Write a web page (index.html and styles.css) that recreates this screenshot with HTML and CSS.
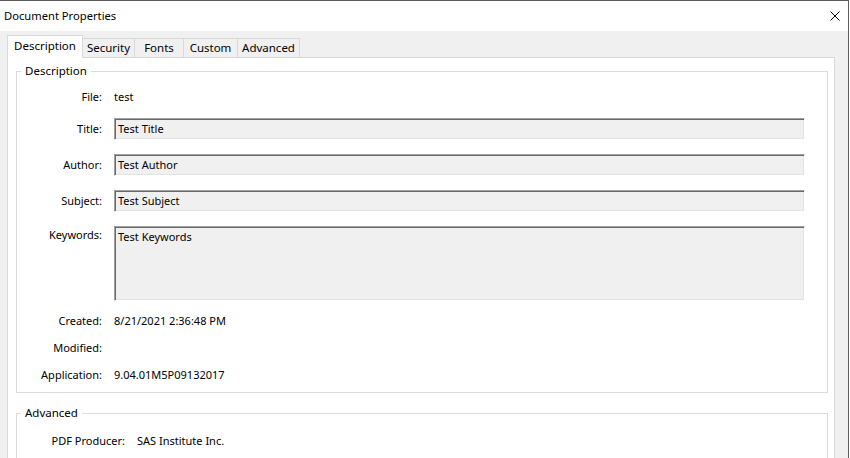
FILE: index.html
```html
<!DOCTYPE html>
<html lang="en">
<head>
<meta charset="utf-8">
<title>Document Properties</title>
<link rel="stylesheet" href="styles.css">
</head>
<body>
<div class="window">
  <div class="titlebar">
    <span class="title">Document Properties</span>
    <svg class="close" width="10" height="10" viewBox="0 0 10 10" aria-label="Close">
      <path d="M0.5 0.5 L9.5 9.5 M9.5 0.5 L0.5 9.5" stroke="#000" stroke-width="1" fill="none"/>
    </svg>
  </div>
  <div class="client">
    <div class="tabs">
      <div class="tab active tab-description">Description</div>
      <div class="tab tab-security">Security</div>
      <div class="tab tab-fonts">Fonts</div>
      <div class="tab tab-custom">Custom</div>
      <div class="tab tab-advanced">Advanced</div>
    </div>
    <div class="panel">
      <fieldset class="group group-description">
        <legend>Description</legend>
        <div class="row row-file">
          <span class="label">File:</span>
          <span class="value">test</span>
        </div>
        <div class="row row-field">
          <span class="label">Title:</span>
          <div class="box">Test Title</div>
        </div>
        <div class="row row-field">
          <span class="label">Author:</span>
          <div class="box">Test Author</div>
        </div>
        <div class="row row-field">
          <span class="label">Subject:</span>
          <div class="box">Test Subject</div>
        </div>
        <div class="row row-keywords">
          <span class="label">Keywords:</span>
          <div class="box box-multi">Test Keywords</div>
        </div>
        <div class="row row-info row-created">
          <span class="label">Created:</span>
          <span class="value">8/21/2021 2:36:48 PM</span>
        </div>
        <div class="row row-info">
          <span class="label">Modified:</span>
          <span class="value"></span>
        </div>
        <div class="row row-info">
          <span class="label">Application:</span>
          <span class="value">9.04.01M5P09132017</span>
        </div>
      </fieldset>
      <fieldset class="group group-advanced">
        <legend>Advanced</legend>
        <div class="row row-producer">
          <span class="label">PDF Producer:</span>
          <span class="value">SAS Institute Inc.</span>
        </div>
      </fieldset>
    </div>
  </div>
</div>
</body>
</html>
```
FILE: styles.css
```css
* {
  box-sizing: border-box;
}

html, body {
  margin: 0;
  padding: 0;
  background: #ffffff;
  overflow: hidden;
}

body {
  width: 850px;
  height: 458px;
  font-family: "Noto Sans", "Open Sans", sans-serif;
  font-size: 11px;
  line-height: 16px;
  color: #000;
}

.window {
  width: 849px;
  height: 458px;
  overflow: hidden;
  border-top: 1px solid #5c5c5c;
  border-right: 1px solid #5c5c5c;
  display: flex;
  flex-direction: column;
}

/* caption bar */
.titlebar {
  height: 30px;
  flex: none;
  background: #fff;
  display: flex;
  align-items: center;
  justify-content: space-between;
  padding: 0 8px 0 4px;
  font-size: 11.2px;
}

.close {
  display: block;
  margin-top: -1px;
}

/* dialog client area */
.client {
  flex: 1;
  background: #f0f0f0;
  padding: 4px 13px 0 7px;
  display: flex;
  flex-direction: column;
}

.tabs {
  display: flex;
  align-items: flex-end;
  height: 22px;
  flex: none;
}

.tab {
  height: 19px;
  border-top: 1px solid #d9d9d9;
  border-right: 1px solid #d9d9d9;
  background: #f0f0f0;
  display: flex;
  align-items: center;
  justify-content: center;
  white-space: nowrap;
  font-size: 11.5px;
}

.tab.active {
  position: relative;
  z-index: 1;
  height: 23px;
  margin-bottom: -1px;
  background: #fff;
  border-left: 1px solid #d9d9d9;
  padding-bottom: 2px;
}

.tab-description { width: 76px; }
.tab-security { width: 52px; }
.tab-fonts { width: 49px; }
.tab-custom { width: 54px; }
.tab-advanced { width: 62px; }

.panel {
  flex: 1;
  background: #fff;
  border: 1px solid #d9d9d9;
  border-bottom: none;
  padding: 0 6px 0 8px;
}

/* group boxes */
.group {
  margin: 5px 0 0 0;
  padding: 7px 22px 6px 0;
  border: 1px solid #dcdcdc;
  min-width: 0;
}

.group legend {
  margin-left: 4px;
  padding: 0 4px;
  line-height: 16px;
  font-size: 11.5px;
}

.group-advanced {
  margin-top: 12px;
  padding-top: 9px;
  padding-bottom: 40px;
}

.row {
  display: grid;
  grid-template-columns: 85px 1fr;
  column-gap: 12px;
  align-items: center;
  min-height: 22px;
}

.label {
  text-align: right;
  white-space: nowrap;
}

.value {
  white-space: nowrap;
}

.row-file { margin-bottom: 10px; }
.row-field { margin-bottom: 14px; }
.row-keywords {
  align-items: start;
  margin-bottom: 9px;
}
.row-keywords .label { padding-top: 1px; }
.row-info + .row-info { margin-top: 5px; }

.row-producer {
  grid-template-columns: 108px 1fr;
}

/* sunken read-only edit fields */
.box {
  height: 22px;
  background: #f0f0f0;
  border: 1px solid;
  border-color: #a0a0a0 #ffffff #ffffff #a0a0a0;
  box-shadow: inset 1px 1px 0 #696969, inset -1px -1px 0 #e3e3e3;
  padding: 2px 3px 0 3px;
  white-space: nowrap;
  overflow: hidden;
}

.box-multi {
  height: 75px;
}
```
